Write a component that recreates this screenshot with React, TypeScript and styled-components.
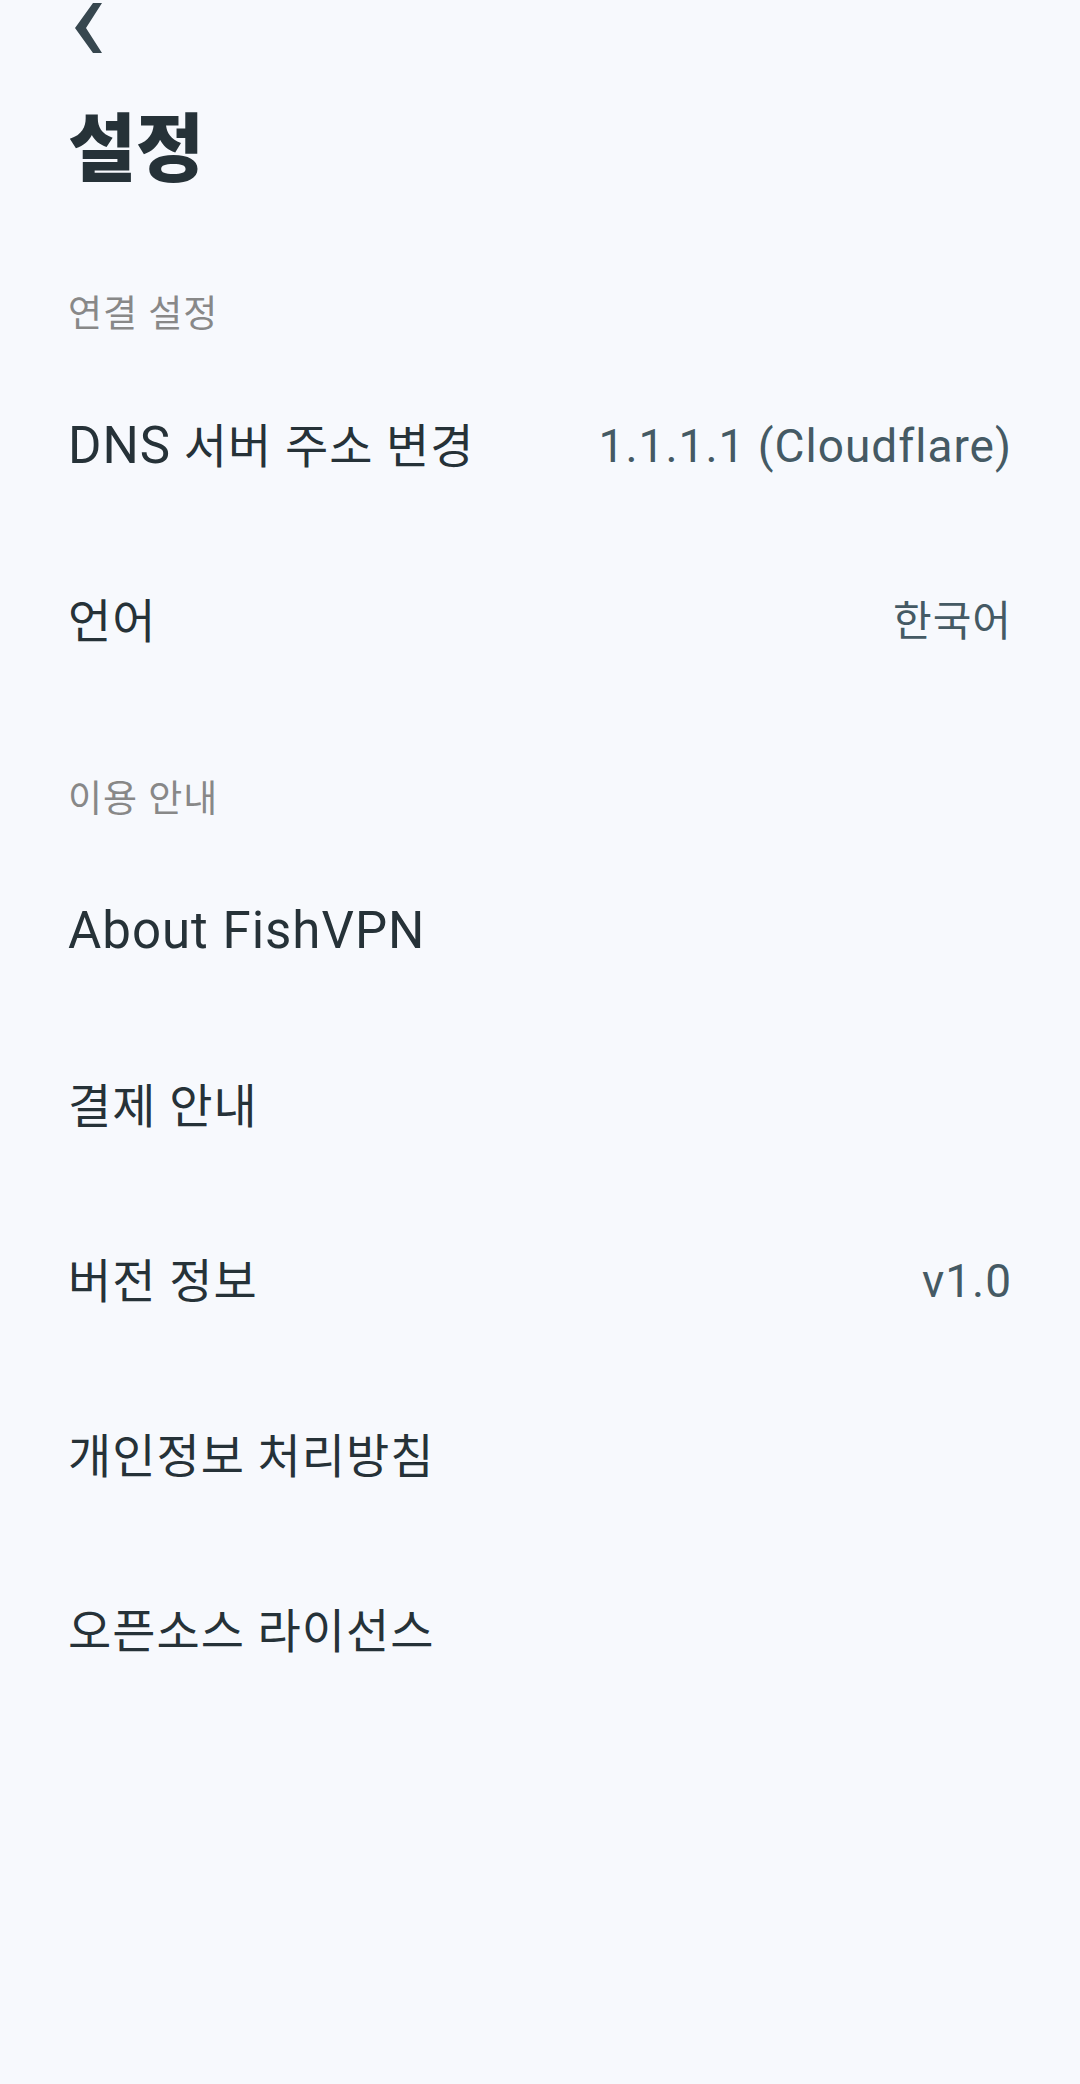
import React from "react";
import styled, { createGlobalStyle } from "styled-components";

const GlobalStyle = createGlobalStyle`
  * {
    box-sizing: border-box;
  }

  body {
    margin: 0;
    background-color: #f7f9fd;
    font-family: Roboto, "Noto Sans CJK KR", sans-serif;
  }
`;

const Page = styled.main`
  padding: 0 68px;
`;

const BackButton = styled.button`
  display: block;
  height: 56px;
  padding: 0 6px;
  border: none;
  background: none;
  cursor: pointer;

  svg {
    display: block;
  }
`;

const Title = styled.h1`
  margin: 40px 0 20px;
  font-size: 74px;
  line-height: 108px;
  font-weight: 900;
  color: #263238;
`;

const SectionTitle = styled.h2`
  margin: 0;
  padding: 67px 0 20px;
  font-size: 37px;
  line-height: 48px;
  font-weight: 400;
  letter-spacing: 1px;
  color: #888888;
`;

const List = styled.ul`
  margin: 0;
  padding: 0;
  list-style: none;
`;

const Item = styled.a`
  display: flex;
  align-items: center;
  justify-content: space-between;
  height: 175px;
  line-height: 64px;
  letter-spacing: 1px;
  color: #263238;
  text-decoration: none;
`;

const Label = styled.span`
  font-size: 47px;
`;

const Value = styled.span`
  font-size: 42px;
  color: #455a64;
`;

// latin glyphs are set a bit larger than hangul
const Latin = styled.span<{ $size: number }>`
  font-size: ${(props) => props.$size}px;
`;

const sections = [
  {
    title: "연결 설정",
    items: [
      {
        label: (
          <>
            <Latin $size={51}>DNS</Latin> 서버 주소 변경
          </>
        ),
        value: <Latin $size={46}>1.1.1.1 (Cloudflare)</Latin>,
      },
      { label: "언어", value: "한국어" },
    ],
  },
  {
    title: "이용 안내",
    items: [
      { label: <Latin $size={51}>About FishVPN</Latin> },
      { label: "결제 안내" },
      { label: "버전 정보", value: <Latin $size={46}>v1.0</Latin> },
      { label: "개인정보 처리방침" },
      { label: "오픈소스 라이선스" },
    ],
  },
];

const App = () => {
  return (
    <Page>
      <GlobalStyle />
      <BackButton type="button" aria-label="뒤로">
        <svg width="30" height="56" viewBox="0 0 30 56" fill="#37474f">
          <path d="M19 3H28L12 28L28 53H19L1 28Z" />
        </svg>
      </BackButton>
      <Title>설정</Title>
      {sections.map((section) => (
        <section key={section.title}>
          <SectionTitle>{section.title}</SectionTitle>
          <List>
            {section.items.map((item, index) => (
              <li key={index}>
                <Item href="#">
                  <Label>{item.label}</Label>
                  {item.value && <Value>{item.value}</Value>}
                </Item>
              </li>
            ))}
          </List>
        </section>
      ))}
    </Page>
  );
};

export default App;
